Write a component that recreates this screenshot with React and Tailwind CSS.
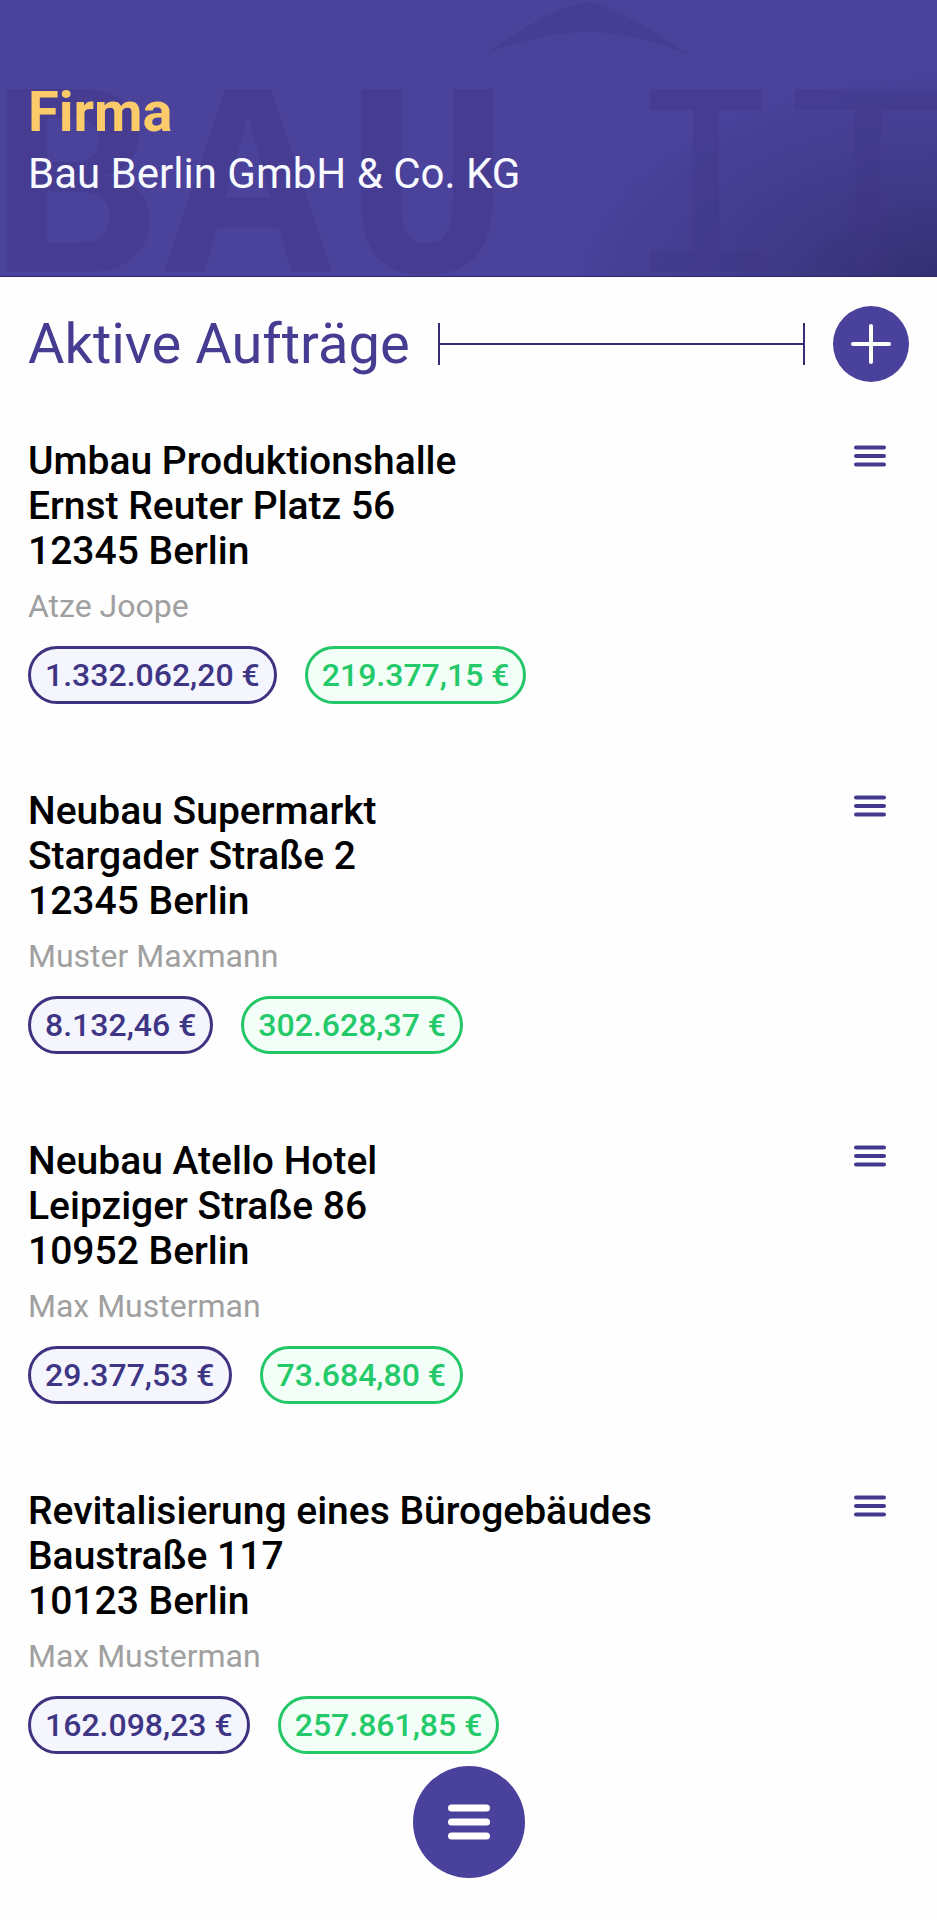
import React from 'react';

const orders = [
  { title: 'Umbau Produktionshalle', street: 'Ernst Reuter Platz 56', city: '12345 Berlin', contact: 'Atze Joope', total: '1.332.062,20 €', paid: '219.377,15 €' },
  { title: 'Neubau Supermarkt', street: 'Stargader Straße 2', city: '12345 Berlin', contact: 'Muster Maxmann', total: '8.132,46 €', paid: '302.628,37 €' },
  { title: 'Neubau Atello Hotel', street: 'Leipziger Straße 86', city: '10952 Berlin', contact: 'Max Musterman', total: '29.377,53 €', paid: '73.684,80 €' },
  { title: 'Revitalisierung eines Bürogebäudes', street: 'Baustraße 117', city: '10123 Berlin', contact: 'Max Musterman', total: '162.098,23 €', paid: '257.861,85 €' },
];

function Watermark() {
  return (
    <svg className="absolute inset-0 h-full w-full" viewBox="0 0 937 276" preserveAspectRatio="xMinYMin slice" aria-hidden="true">
      <defs>
        <radialGradient id="shade" gradientUnits="userSpaceOnUse" cx="0" cy="0" r="1" gradientTransform="translate(960 300) scale(390 230)">
          <stop offset="0" stopColor="#2e2a66" stopOpacity="0.9" />
          <stop offset="0.5" stopColor="#2e2a66" stopOpacity="0.35" />
          <stop offset="1" stopColor="#2e2a66" stopOpacity="0" />
        </radialGradient>
      </defs>
      <rect width="937" height="276" fill="url(#shade)" />
      <path d="M488 53 Q530 20 574 5 Q587 0 600 5 Q645 22 688 55 Q640 33 588 32 Q540 32 488 53Z" fill="#3d3684" fillOpacity="0.35" />
      <g fill="#3d3684" fillOpacity="0.32" fontFamily="'Liberation Mono', monospace" fontSize="278" textAnchor="middle">
        <text x="72" y="272" fontWeight="700">B</text>
        <text x="248" y="272" fontWeight="700">A</text>
        <text x="427" y="272" fontWeight="700">U</text>
        <text x="706" y="272">I</text>
        <text x="868" y="272">T</text>
      </g>
    </svg>
  );
}

function Order({ order }) {
  return (
    <li className="flex items-start justify-between">
      <div>
        <h3 className="text-[39px] leading-[45px] font-medium text-black">
          {order.title}
          <br />
          {order.street}
          <br />
          {order.city}
        </h3>
        <p className="mt-3 text-[32px] leading-[40px] text-[#a0a0a0]">{order.contact}</p>
        <div className="mt-5 flex gap-7">
          <span className="rounded-full border-3 border-[#3d3380] bg-[#f5f5fd] px-3.5 text-[32px] leading-[52px] font-medium text-[#3f3585]">{order.total}</span>
          <span className="rounded-full border-3 border-[#24c768] bg-[#f2fef7] px-3.5 text-[32px] leading-[52px] font-medium text-[#24ca69]">{order.paid}</span>
        </div>
      </div>
      <button type="button" aria-label="Auftragsmenü" className="mr-[18px] p-[5px]">
        <svg className="h-6 w-8" viewBox="0 0 32 24" fill="none" stroke="#43398f" strokeWidth="4" strokeLinecap="round">
          <path d="M2 3.5H30M2 12H30M2 20.5H30" />
        </svg>
      </button>
    </li>
  );
}

export default function App() {
  return (
    <div className="bg-[#fefefe] font-['Roboto',sans-serif]">
      <header className="relative overflow-hidden border-b border-[#2f2868] bg-[#4a429b] px-7 pt-20 pb-[77px]">
        <Watermark />
        <div className="relative">
          <h1 className="text-[56px] leading-[64px] font-bold text-[#fbcb69]">Firma</h1>
          <p className="mt-[5px] text-[42px] leading-[50px] text-[#f8faff]">Bau Berlin GmbH &amp; Co. KG</p>
        </div>
      </header>

      <main className="px-7 pt-[29px]">
        <div className="flex items-center gap-7">
          <h2 className="text-[56px] leading-[76px] text-[#463c92]">Aktive Aufträge</h2>
          <div className="flex h-[42px] flex-1 items-center border-x-2 border-[#342b70]">
            <div className="h-[2px] w-full bg-[#342b70]" />
          </div>
          <button type="button" aria-label="Auftrag hinzufügen" className="flex size-[76px] items-center justify-center rounded-full bg-[#4a419c]">
            <svg className="size-10" viewBox="0 0 40 40" fill="none" stroke="#fff" strokeWidth="4" strokeLinecap="round">
              <path d="M20 2V38M2 20H38" />
            </svg>
          </button>
        </div>

        <ul className="mt-[57px] flex flex-col gap-[85px]">
          {orders.map((order) => (
            <Order key={order.title} order={order} />
          ))}
        </ul>
      </main>

      <footer className="flex justify-center pt-3 pb-10">
        <button type="button" aria-label="Menü" className="flex size-28 items-center justify-center rounded-full bg-[#4a419c]">
          <svg className="h-9 w-11" viewBox="0 0 44 36" fill="none" stroke="#fff" strokeWidth="7" strokeLinecap="round">
            <path d="M4.500 4H39.500M4.500 18H39.500M4.500 32H39.500" />
          </svg>
        </button>
      </footer>
    </div>
  );
}
